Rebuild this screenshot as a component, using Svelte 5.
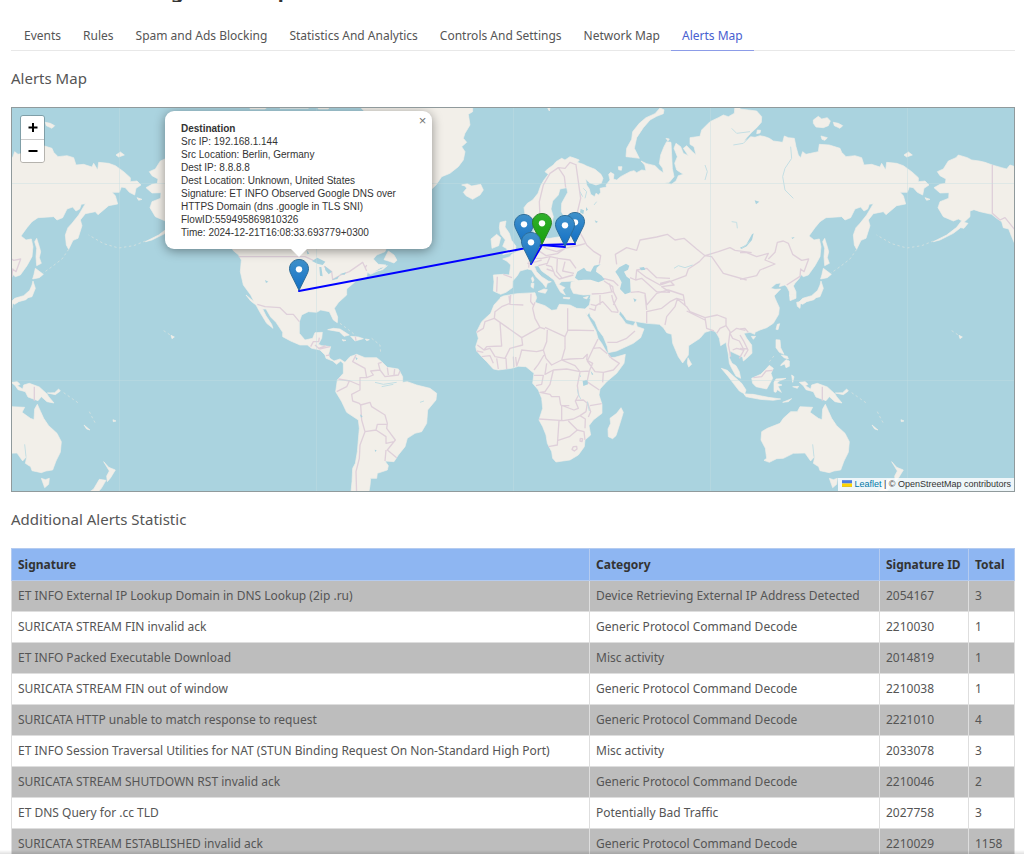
<script>
  const tabs = [
    'Events',
    'Rules',
    'Spam and Ads Blocking',
    'Statistics And Analytics',
    'Controls And Settings',
    'Network Map',
    'Alerts Map'
  ];
  let active = $state('Alerts Map');
  let popupOpen = $state(true);

  const popup = [
    'Src IP: 192.168.1.144',
    'Src Location: Berlin, Germany',
    'Dest IP: 8.8.8.8',
    'Dest Location: Unknown, United States',
    'Signature: ET INFO Observed Google DNS over HTTPS Domain (dns .google in TLS SNI)',
    'FlowID:559495869810326',
    'Time: 2024-12-21T16:08:33.693779+0300'
  ];

  const rows = [
    ['ET INFO External IP Lookup Domain in DNS Lookup (2ip .ru)', 'Device Retrieving External IP Address Detected', '2054167', '3'],
    ['SURICATA STREAM FIN invalid ack', 'Generic Protocol Command Decode', '2210030', '1'],
    ['ET INFO Packed Executable Download', 'Misc activity', '2014819', '1'],
    ['SURICATA STREAM FIN out of window', 'Generic Protocol Command Decode', '2210038', '1'],
    ['SURICATA HTTP unable to match response to request', 'Generic Protocol Command Decode', '2221010', '4'],
    ['ET INFO Session Traversal Utilities for NAT (STUN Binding Request On Non-Standard High Port)', 'Misc activity', '2033078', '3'],
    ['SURICATA STREAM SHUTDOWN RST invalid ack', 'Generic Protocol Command Decode', '2210046', '2'],
    ['ET DNS Query for .cc TLD', 'Potentially Bad Traffic', '2027758', '3'],
    ['SURICATA STREAM ESTABLISHED invalid ack', 'Generic Protocol Command Decode', '2210029', '1158']
  ];

  // Marker tips, in map pixels.
  const markers = [
    { x: 563, y: 136, name: 'Moscow', tone: 'blue' },
    { x: 512, y: 138, name: 'London', tone: 'blue' },
    { x: 530, y: 137, name: 'Berlin', tone: 'green' },
    { x: 553, y: 139, name: 'Minsk', tone: 'blue' },
    { x: 519, y: 156, name: 'Zurich', tone: 'blue' },
    { x: 287, y: 183, name: 'United States', tone: 'blue' }
  ];
  const hub = [530, 137];

  // Coastlines are stored per chart sheet, at three units to a map pixel.
  const sheets = {
    W: [0, 315], N: [750, 315], E: [1410, 315], R: [2220, 315], r: [-144, 315],
    w: [0, 885], S: [750, 885], A: [1410, 885], P: [2220, 885]
  };
  function line(...parts) {
    const pts = [];
    for (let i = 0; i < parts.length; i += 2) {
      const [ox, oy] = sheets[parts[i]];
      for (const p of parts[i + 1].split(' ')) {
        const [x, y] = p.split(',').map(Number);
        pts.push(`${x + ox} ${y + oy}`);
      }
    }
    return 'M' + pts.join('L');
  }
  const area = (...parts) => line(...parts) + 'Z';
  const lines = (sheet, list) => list.map((s) => line(sheet, s)).join('');
  const areas = (sheet, list) => list.map((s) => area(sheet, s)).join('');

  const land = [
    area(
      'E', '165,328 162,308 172,295 188,285 204,265 213,240 222,225 235,208 225,200 233,192 250,180 258,170 275,160 285,165 300,155 315,160 328,165 322,172 340,178 350,183 375,193 393,208 399,220 394,235 378,240 358,233 347,222 350,240 358,252 362,268 374,275 378,265 386,270 392,262 390,250 410,246 408,240 420,225 416,208 422,202 432,208 430,222 440,225 452,215 480,200 492,197 500,203 515,195 528,197 524,180 513,168 530,176 555,182 568,195 580,204 578,190 568,176 572,150 582,125 590,110 603,112 605,150 607,190 612,215 598,232 585,234 604,238 618,228 625,212 640,208 620,195 614,175 622,155 612,130 618,115 632,125 640,145 655,152 640,130 650,122 665,138 678,150 672,125 660,118 660,98 690,94 695,75 720,50 745,38 760,30 775,35 793,25 795,0',
      'R', '0,0 0,12 25,15 50,18 65,35 64,52 50,68 35,82 20,98 12,108 22,104 32,95 45,97 60,92 75,95 88,100 100,108 128,112 133,93 145,98 163,100 168,125 175,150 182,158 188,140 198,148 212,145 235,140 238,118 268,120 300,130 305,142 318,155 345,152 365,158 372,180 395,178 420,186 425,175 437,195 440,172 470,175 490,182 515,200 535,218 535,230 555,228 567,240 552,250 548,270 532,262 520,248 508,246 502,262 480,262 490,272 497,297 470,302 438,329 430,320 400,326 385,345 390,362 378,400 363,406 350,433 343,420 340,390 348,368 360,355 380,330 400,296 388,298 383,312 372,318 362,306 345,312 332,338 315,345 305,335 258,338 240,350 225,368 207,393 222,405 238,402 243,425 240,455 225,482 205,510 190,515 182,508 178,520 165,535 160,543 168,560 168,580 150,587 148,560 142,548 135,540 118,545 122,534 108,536 92,550 105,553 122,552 103,572 102,590',
      'P', '103,5 118,38 116,58 100,85 80,98 60,105 45,112 44,118 30,112 12,115 20,130 35,150 36,175 20,190 10,198 8,187 0,182',
      'A', '800,178 780,168 778,188 786,205 798,212 808,230 812,250 798,243 785,220 778,205 775,178 768,142 752,152 748,130 738,112 728,105 705,112 690,130 656,152 655,180 638,204 625,185 608,145 605,118 590,113 580,98 568,88 530,85 500,80 470,74 462,62 450,48 447,58 458,72 468,86 490,92 497,80 502,95 522,102 512,128 490,145 440,168 415,173 412,155 400,125 385,105 375,80 362,65 358,52 352,60 345,50 352,62 362,80 378,108 384,130 395,145 408,168 415,178 418,188 435,187 466,178 462,205 440,235 410,260 390,282 387,300 396,328 396,355 370,375 357,392 362,420 345,435 343,455 325,480 300,495 258,501 248,490 245,470 232,445 228,420 218,395 207,375 218,340 215,310 205,285 188,265 192,235 180,225 168,215 145,214 125,220 85,225 70,222 50,200 35,185 20,168 17,155 25,130 20,110 35,80 62,55 72,30 92,8',
      'E', '90,578 100,573 140,566 195,563 200,578 195,592',
      'A', '195,22 225,32 245,46 260,44 268,28 300,30 320,40 345,42 358,30 364,0',
      'E', '360,582 363,569 340,570 310,565 302,548 303,532 315,528 275,530 266,538 285,548 278,555 286,570 272,562 262,545 252,525 235,512 215,498 205,482 193,484 200,500 215,515 235,528 244,530 232,535 228,548 218,535 198,515 185,495 172,492 150,498 142,512 128,528 127,548 108,562 92,568 70,558 72,530 70,510 100,508 118,510 122,480 110,468 98,462 120,455 125,448 150,435 165,420 175,410 190,398 192,370 203,362 204,388 218,400 240,400 270,395 280,380 280,360 300,350 312,340 335,334 310,330 284,336 274,320 275,295 293,262 290,248 270,252 265,270 248,288 243,312 250,335 243,365 228,378 217,360 210,335 190,340 172,337'
    ),
    area(
      'r', '850,200 825,185 810,180 800,192 785,188 757,180 735,172 718,168 695,165 682,158 655,150 648,158 625,168 610,192 592,200 600,212 618,222 616,235 600,238 582,248 600,264 627,263 626,280 600,290 594,308 610,335 640,348 655,342 665,347 650,367 620,390 580,410 600,405 640,385 662,368 672,370 684,355 672,352 690,335 690,318 702,314 720,320 755,328 770,340 785,350 790,368 806,372 815,395 828,425 840,430',
      'W', '700,437 716,450 724,465 721,500 730,540 752,570 762,590',
      'w', '738,0 752,18 768,30 780,52',
      'S', '38,65 50,85 69,100 65,88 48,62 38,42 48,42 62,66 78,82 98,112 98,125 122,138 150,150 172,150 185,160 210,165 225,180 228,190 248,198 260,208 272,198 280,206 280,235 262,255 257,290 275,320 290,352 325,375 328,400 322,470 316,505 308,520 306,560 302,600 355,600 360,572 362,550 380,550 382,535 412,525 415,512 405,498 432,500 445,480 465,455 472,430 495,415 515,410 530,385 533,345 558,315 560,295 540,280 500,270 472,260 458,262 458,245 445,222 412,217 395,200 380,188 345,188 320,178 300,185 285,202 270,192 252,198 240,190 235,180 242,155 215,152 205,148 215,130 217,112 195,113 188,130 165,135 148,115 148,80 155,60 175,50 200,52 212,45 238,50 250,75 262,83 263,66 253,40 266,22 290,0',
      'N', '290,570 290,552 310,535 318,528 350,515 352,502 362,508 395,492 408,480 385,478 370,462 380,450 405,440 420,400 420,200 300,120 0,100'
    ),
    area('N', '325,0 668,0 668,20 655,28 660,60 645,85 640,100 650,112 635,125 645,140 640,165 625,185 600,205 575,215 558,240 535,262 515,300 480,250 440,120'),
    areas('N', ['635,240 645,243 650,250 640,262 648,272 668,283 690,270 700,255 692,238 665,243 652,236', '415,438 432,450 441,466 432,474 415,468 402,464', '412,482 398,494 372,500 392,488', '0,0 60,0 45,12 0,12', '85,0 180,0 175,10 90,10', '200,0 240,0 235,12 205,12']),
    areas('E', ['468,155 470,130 485,103 488,80 508,55 528,38 555,26 570,9 582,14 580,26 560,34 540,45 520,68 500,98 493,130 508,160 485,157', '90,352 108,348 105,366 118,385 124,405 138,424 134,440 98,449 112,432 98,424 106,405 92,388 88,368', '63,402 80,388 92,398 86,422 66,430', '228,0 242,0 238,18', '188,515 192,525 188,532 184,520', '184,535 192,535 190,550 183,545', '445,185 456,185 454,196 446,194', '588,100 598,102 594,108', '204,560 222,552 232,554 226,565', '280,577 300,578 298,582 280,580', '340,578 355,574 350,582']),
    areas('R', ['220,45 235,34 245,42 262,38 271,48 265,62 250,68 228,66 220,55', '280,52 295,55 308,62 300,70 283,62', '243,93 262,98 255,106 246,103', '492,150 505,141 517,150 500,156', '254,400 262,425 266,440 262,458 268,475 254,482 252,455 254,430 248,410', '250,490 274,508 262,518 242,522 246,508', '243,528 250,550 240,575 228,578 222,584 200,590 188,598 176,592 188,580 215,572 233,556 240,540', '52,75 62,76 60,84 50,86', '555,278 570,283 560,286']),
    areas('S', ['233,104 250,100 270,102 298,120 282,124 268,110', '302,124 325,126 340,131 315,138', '346,132 358,134 350,137', '276,134 288,136 280,138']),
    areas('w', ['513,121 523,126 516,131']),
    areas('A', ['453,338 460,352 450,385 438,422 428,431 415,425 414,402 422,385 420,370 440,355', '654,188 665,208 656,216 652,205', '754,220 772,226 790,243 815,265 828,285 824,297 808,288 790,265 775,245', '822,297 850,300 840,306']),
    areas('P', ['12,297 40,298 85,307 122,312 100,316 60,313 18,305', '35,250 62,238 78,222 88,211 100,220 93,235 98,250 80,282 48,275 38,265', '102,262 108,252 138,250 118,258 110,265 126,270 114,274 124,292 112,284 108,292 102,290', '108,134 120,135 122,158 132,178 118,172 108,158', '124,208 138,194 148,198 148,214 138,218 134,207 122,212', '124,180 142,184 145,192 132,188', '108,103 112,88 119,86 114,104', '34,124 47,124 40,133', '178,262 196,260 204,268 196,272 212,282 215,270 232,265 262,276 285,297 290,305 306,324 285,320 268,305 258,317 228,306 220,290 198,284 190,272', '286,294 308,293 320,282 325,288 310,299', '128,322 155,311 145,320', '65,410 63,435 76,460 80,490 72,496 88,502 110,491 130,490 160,475 195,474 212,498 225,483 220,505 236,515 240,527 268,533 282,528 302,525 312,498 325,472 328,440 315,415 290,392 275,370 266,350 256,328 248,342 246,374 235,370 210,352 218,337 180,335 172,350 152,350 130,370 120,385 82,400', '268,550 280,554 292,550 290,568 278,578', '455,500 470,517 490,525 476,548 466,560 464,543 472,528', '442,553 462,556 448,580 430,600 400,600 425,582', '396,390 414,405 404,402', '483,374 492,378 484,380', '148,0 166,0 155,12', '170,22 182,20 180,40 172,34', '188,15 206,12 196,22', '155,240 162,245 158,262', '158,275 176,274 172,280']
    )
  ].join('');

  const chains =
    lines('R', ['350,433 330,462 300,485 272,505', '580,408 545,422 500,429 455,416 410,390']) +
    lines('P', ['335,293 362,312 382,326', '412,350 422,370 432,388', '88,200 104,180', '635,107 655,120']) +
    lines('S', ['270,85 290,100 318,122', '365,130 390,150 392,175']);

  const water = [
    areas('E', ['315,518 322,500 342,488 350,498 362,500 372,482 392,478 380,488 378,500 395,512 404,524 385,532 362,524 342,524 325,526', '436,500 448,487 468,476 478,482 474,494 462,500 470,515 480,522 482,562 465,568 450,552 455,532 446,515', '508,488 522,486 526,494 514,496', '332,312 342,316 340,328 330,322', '348,306 354,314 348,318', '374,346 384,350 378,354']),
    areas('R', ['0,428 18,420 36,388 41,385 36,405 20,424 4,432', '44,286 58,290 48,298', '154,398 164,396 158,402']),
    areas('A', ['338,258 352,255 354,268 340,273', '362,228 370,238 366,240', '490,10 500,14 494,22', '372,174 378,178']),
    areas('N', ['186,468 202,458 226,470 218,480 202,476', '208,486 214,486 218,514 210,512', '224,482 246,500 236,508 226,496', '244,526 268,512 262,522', '268,508 288,502 284,509', '45,525 55,530 48,534', '170,435 178,446 172,448']),
    areas('S', ['316,186 323,190 319,196', '330,358 338,364 333,368', '374,464 380,466 376,471'])
  ].join('');

  const rivers =
    lines('R', ['152,125 155,160 135,190 128,215 135,255 160,280']) +
    lines('E', ['612,490 625,482 645,488 668,480', '785,70 800,85 840,80', '790,120 820,115 835,100', '705,180 712,200 705,225', '815,430 840,410', '785,350 800,352 802,370', '340,250 350,260 345,280', '330,260 338,275', '380,290 372,300']) +
    lines('A', ['322,283 326,300 332,312', '352,320 358,348', '330,240 332,246']) +
    lines('S', ['375,262 400,268 440,262', '395,275 430,268', '510,322 522,318']) +
    lines('P', ['218,448 222,485']);

  const borders = [
    lines('A', [
      '122,0 120,25 95,35 75,50 73,70 45,80 40,100 20,112', '73,70 155,128 210,97 225,102', '90,82 95,153 50,155 42,165 22,150', '155,128 158,150 120,160 105,190 75,185 60,160 42,165', '195,22 188,40 195,70 210,97', '225,97 285,125 293,107 293,40', '293,105 372,107', '285,125 285,160 275,195', '232,105 230,140 220,165 200,170 155,165 150,185 140,213', '220,165 228,190 245,210 275,195 300,192 340,190 352,178 350,195', '222,180 205,208 192,225', '230,205 225,238 250,225 290,222 330,230 315,212 275,195', '330,230 358,228 368,205 350,195', '370,160 352,198 375,230 400,232 430,225 448,205 425,190 415,178', '384,132 370,160 390,158 412,176', '400,232 398,262', '358,228 352,256', '345,256 388,285', '250,225 240,268 225,290 210,292 240,298 245,305 268,305 272,330 312,345 325,340 316,318 326,300 322,272 330,232', '192,241 220,241 215,268 198,272', '207,372 280,377 310,372 330,362 348,350', '275,330 275,375', '318,316 340,315 352,325 348,350', '275,332 298,332', '267,377 262,450 235,455', '262,437 298,425 322,405 342,410 345,435', '295,378 322,405', '330,362 346,372 345,400', '360,332 395,326', '352,320 362,350 355,366', '80,190 85,222', '108,190 110,222', '130,185 132,216', '137,186 140,214', '35,185 60,182 70,205', '20,168 40,172', '358,40 375,46 378,32 398,20 425,50 445,52', '362,28 378,32', '412,142 440,142 470,130 495,108', '425,0 430,20 445,50', '530,85 530,50 575,40 600,20 620,10 640,16', '585,90 590,65 615,35 622,12 650,35 660,50 705,68 742,60 768,70 768,92 750,100 740,115', '705,68 710,100 732,108', '768,92 780,110 775,150 782,185', '780,115 800,100 826,106', '780,115 788,130 808,138 822,165 808,190', '788,165 800,160 820,165', '650,48 705,75', '530,45 525,0', '310,455 320,454 321,462 313,468 306,463 310,455', '331,430 338,432 336,440 330,438 331,430'
    ]),
    lines('E', [
      '210,335 208,290 220,240 240,205 265,188 285,190 300,172 320,180', '265,188 283,215 287,248', '318,180 325,230 332,280 322,322', '330,334 322,370 340,400 350,420 372,440 392,452 388,476', '285,395 285,430 260,440 228,430 215,420 215,400', '285,430 330,420 345,416', '170,450 185,460 215,460 240,455 265,460 300,465 318,490', '185,445 210,440 228,452 262,446 285,430', '228,480 245,485 255,510 268,522 310,510', '240,455 232,475 205,482', '262,462 260,500 275,518', '230,492 252,500', '285,470 278,498 312,505', '165,420 180,450 176,488', '172,475 200,470 215,465', '100,508 126,518', '82,515 80,560', '440,478 436,448 470,428 500,436 510,405 560,396 592,388 615,405 642,400 680,432 705,452 688,470 655,492 648,512 600,530 570,540 530,518 500,495 497,525 480,518', '705,452 745,440 780,428 795,436 845,443', '705,452 725,455 760,505 830,525', '482,562 505,560 525,565 530,600', '497,525 515,520 560,560 600,562', '530,600 560,565 595,555 640,570 645,600', '570,535 600,528 612,540 575,545 600,562', '365,567 400,565 430,560 428,545 402,528', '430,560 440,580 430,600', '400,520 430,528 445,542', '418,535 425,560', '390,570 390,600', '117,572 120,598 160,600', '183,566 182,590 190,600', '500,495 530,490 560,518 600,520'
    ]),
    lines('R', ['0,443 20,443 50,455 85,445 75,465 105,477 60,495 50,512 0,523', '85,462 105,442 112,412 130,408 145,415 158,448 185,466 206,462 192,500 182,492 180,514 140,540']),
    lines('r', ['757,180 757,325 780,345 795,338 825,375']),
    lines('W', ['716,455 765,455']),
    lines('N', ['0,455 165,455 190,466', '222,484 245,500 248,524 272,510 298,500 338,472 350,498', '350,480 345,490']),
    lines('S', ['22,28 45,35 90,38 110,58 130,58 148,80', '182,155 190,140 206,140 208,128', '195,150 206,160 228,152', '208,162 240,155', '228,182 240,180', '318,180 308,200 345,220 350,248 330,248 330,285 305,298 308,318 328,325 332,330 360,322 365,335 405,360 412,385 410,400 436,435 412,465 440,488', '350,248 370,240 362,228 390,225 385,205 395,202', '390,225 405,245 445,240 450,228', '412,218 415,240', '434,222 432,240', '265,252 300,258 328,270', '260,290 290,275 298,258', '332,330 335,375 345,410 378,405 382,388 410,388', '378,405 408,425 408,445 432,440', '408,465 405,498', '345,410 330,450 328,490 318,530 320,600', '316,125 318,137']),
    lines('P', ['247,275 247,317', '40,248 65,245 78,228 98,226', '0,102 15,100 25,112', '0,120 12,140 24,165 12,185', '0,160 24,162'])
  ].join('');

  const copies = [-2, -1, 0, 1, 2];
</script>

<div class="page">
  <div class="title" aria-hidden="true"><span>g</span><span>p</span></div>

  <nav class="tabs">
    {#each tabs as tab}
      <button class:active={tab === active} onclick={() => (active = tab)}>{tab}</button>
    {/each}
  </nav>

  <h2>Alerts Map</h2>

  <div class="map">
    <div class="pane">
      <svg class="world" viewBox="-1188 108 3402 383" aria-hidden="true">
        <defs>
          <g id="world" transform="scale(.333333)">
            <path class="land" d={land} />
            <path class="chain" d={chains} />
            <path class="border" d={borders} />
            <path class="water" d={water} />
            <path class="river" d={rivers} />
          </g>
        </defs>
        {#each copies as n}
          <use href="#world" x={n * 788} />
        {/each}
        <path class="seam" d="M-1188 183.5H2214M-1188 380.5H2214M119.5 108V491M316.5 108V491M513.5 108V491M710.5 108V491M907.5 108V491" />
      </svg>
      <svg class="links" viewBox="0 0 1002 383" aria-hidden="true">
        {#each markers as m}
          <line x1={hub[0]} y1={hub[1]} x2={m.x} y2={m.y} />
        {/each}
      </svg>

      {#each markers as m}
        <button class="marker {m.tone}" aria-label={m.name} style="left: {m.x}px; top: {m.y}px" onclick={() => (popupOpen = true)}>
          <svg viewBox="0 0 25 41" preserveAspectRatio="none">
            <defs>
              <linearGradient id="pin-blue" x1="0" y1="0" x2="0" y2="1">
                <stop offset="0" stop-color="#3f91ca" />
                <stop offset="1" stop-color="#126fc6" />
              </linearGradient>
              <linearGradient id="pin-green" x1="0" y1="0" x2="0" y2="1">
                <stop offset="0" stop-color="#31b02b" />
                <stop offset="1" stop-color="#17a00f" />
              </linearGradient>
            </defs>
            <path
              d="M12.5 .6C5.9 .6 .6 5.9 .6 12.5c0 2.6 .9 5 2 7.2L12.5 40.2l9.9-20.5c1.1-2.2 2-4.6 2-7.2C24.4 5.9 19.1 .6 12.5 .6z"
              fill="url(#pin-{m.tone})"
              stroke={m.tone === 'blue' ? '#2e6c97' : '#2b7f2a'}
              stroke-width="1.2"
            />
            <circle cx="12.5" cy="13.2" r="4" fill="#fff" />
          </svg>
        </button>
      {/each}

      {#if popupOpen}
        <div class="popup">
          <button class="close" aria-label="Close popup" onclick={() => (popupOpen = false)}>×</button>
          <strong>Destination</strong>
          {#each popup as text}
            <div>{text}</div>
          {/each}
        </div>
      {/if}
    </div>

    <div class="zoom">
      <button aria-label="Zoom in">
        <svg viewBox="0 0 23 23"><path d="M12 7V16M7.5 11.5H16.5" /></svg>
      </button>
      <button aria-label="Zoom out">
        <svg viewBox="0 0 23 23"><path d="M7.5 11H16.5" /></svg>
      </button>
    </div>

    <div class="credit">
      <a href="#leaflet"><svg viewBox="0 0 12 8"><path fill="#4c7be1" d="M0 0h12v4H0z" /><path fill="#ffd500" d="M0 4h12v3H0z" /><path fill="#e0bc00" d="M0 7h12v1H0z" /></svg> Leaflet</a>
      | © OpenStreetMap contributors
    </div>
  </div>

  <h2>Additional Alerts Statistic</h2>

  <table>
    <colgroup><col /><col class="category" /><col class="sid" /><col class="total" /></colgroup>
    <thead>
      <tr><th>Signature</th><th>Category</th><th>Signature ID</th><th>Total</th></tr>
    </thead>
    <tbody>
      {#each rows as row}
        <tr>{#each row as cell}<td>{cell}</td>{/each}</tr>
      {/each}
    </tbody>
  </table>
</div>

<style>
  :global(body) {
    margin: 0;
    background: #fff;
  }
  .page {
    padding: 0 9px 0 11px;
    font: 12px/18px 'Noto Sans', sans-serif;
    color: #555;
  }
  .page::after {
    content: '';
    position: fixed;
    inset: auto 0 0;
    height: 4px;
    background: linear-gradient(transparent, rgba(0, 0, 0, 0.12));
  }
  button {
    font: inherit;
    color: inherit;
    border: 0;
    padding: 0;
    background: none;
    cursor: pointer;
  }
  .title {
    display: flex;
    align-items: flex-end;
    gap: 94px;
    height: 2px;
    padding-left: 160px;
    overflow: hidden;
    font-size: 20px;
    font-weight: 700;
    line-height: 22px;
    color: #333;
  }
  .tabs {
    display: flex;
    padding: 18px 2px 0;
    border-bottom: 1px solid #e8e8e8;
  }
  .tabs button {
    height: 31px;
    padding: 1px 11px 0;
    margin-bottom: -1px;
    border-bottom: 1px solid transparent;
  }
  .tabs button.active {
    color: #4860d0;
    border-color: #8c9ce8;
  }
  h2 {
    margin: 17px 0 19px;
    font-size: 15px;
    line-height: 20px;
    font-weight: 400;
  }
  .map {
    position: relative;
    height: 383px;
    border: 1px solid #909a9c;
    overflow: hidden;
    background: #aad3df;
    font-family: 'Liberation Sans', Arial, sans-serif;
  }
  .pane {
    position: absolute;
    top: 0;
    left: 50%;
    width: 1002px;
    height: 383px;
    margin-left: -501px;
  }
  .world {
    position: absolute;
    left: -1200px;
    top: 0;
    width: 3402px;
    height: 383px;
  }
  .links {
    position: absolute;
    inset: 0;
  }
  .links line {
    stroke: #00f;
    stroke-width: 2;
    stroke-linecap: round;
  }
  .land {
    fill: #f2efe9;
    stroke: #f2efe9;
    stroke-width: 2;
    stroke-linejoin: round;
  }
  .water {
    fill: #aad3df;
  }
  .chain,
  .border,
  .river,
  .seam {
    fill: none;
    stroke-linejoin: round;
  }
  .chain {
    stroke: #cfdfdf;
    stroke-width: 3;
    stroke-dasharray: 7 8;
  }
  .border {
    stroke: #dfd0da;
    stroke-width: 4;
  }
  .river {
    stroke: #c4dfe4;
    stroke-width: 3;
  }
  .seam {
    stroke: #c3dfe2;
    stroke-opacity: 0.4;
  }
  .marker {
    position: absolute;
    width: 20px;
    height: 32px;
    margin: -32px 0 0 -10px;
  }
  .marker svg {
    display: block;
    width: 20px;
    height: 32px;
  }
  .popup {
    position: absolute;
    left: 153px;
    top: 3px;
    width: 219px;
    padding: 11px 32px 10px 16px;
    border-radius: 9px;
    background: #fff;
    box-shadow: 0 2px 11px rgba(0, 0, 0, 0.4);
    color: #333;
    font-size: 10px;
    line-height: 13px;
  }
  .popup strong {
    display: block;
  }
  .popup::after {
    content: '';
    position: absolute;
    left: 126px;
    top: 100%;
    border: 8px solid transparent;
    border-top-color: #fff;
    border-bottom: 0;
  }
  .close {
    position: absolute;
    top: 0;
    right: 0;
    width: 19px;
    height: 18px;
    color: #757575;
    font-size: 13px;
    line-height: 17px;
  }
  .zoom {
    position: absolute;
    left: 8px;
    top: 7px;
    border: 1px solid rgba(0, 0, 0, 0.25);
    border-radius: 3px;
    overflow: hidden;
  }
  .zoom button {
    display: block;
    width: 23px;
    height: 23px;
    background: #fff;
  }
  .zoom button + button {
    border-top: 1px solid #ccc;
  }
  .zoom svg {
    display: block;
    width: 23px;
    height: 23px;
    stroke: #000;
    stroke-width: 2;
  }
  .credit {
    position: absolute;
    right: 0;
    bottom: 0;
    padding: 0 3px 0 4px;
    background: rgba(255, 255, 255, 0.8);
    color: #333;
    font-size: 9px;
    line-height: 13px;
  }
  .credit a {
    color: #0078a8;
    text-decoration: none;
  }
  .credit svg {
    width: 10px;
    height: 7px;
  }
  table {
    width: 100%;
    table-layout: fixed;
    border-collapse: collapse;
  }
  .category {
    width: 290px;
  }
  .sid {
    width: 89px;
  }
  .total {
    width: 46px;
  }
  th,
  td {
    height: 30px;
    padding: 0 6px;
    border: 1px solid #dedede;
    text-align: left;
    white-space: nowrap;
  }
  th {
    height: 31px;
    background: #8eb6f2;
    border-color: #b4cbf0;
    color: #333;
    font-weight: 700;
  }
  tbody tr:nth-child(odd) {
    background: #bdbdbd;
  }
</style>
